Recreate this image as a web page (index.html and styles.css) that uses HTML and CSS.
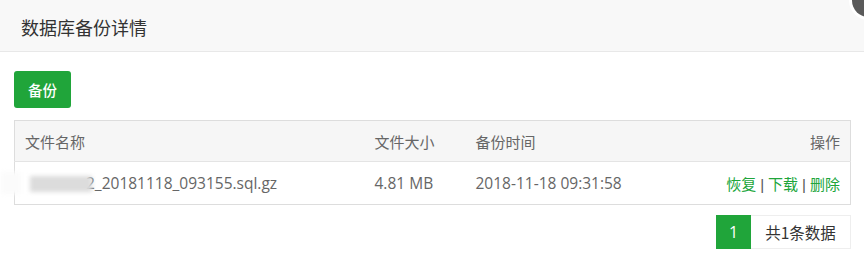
FILE: index.html
```html
<!DOCTYPE html>
<html lang="zh-CN">
<head>
<meta charset="utf-8">
<title>数据库备份详情</title>
<link rel="stylesheet" href="styles.css">
</head>
<body>
<div class="layer">
  <div class="layer-title">数据库备份详情</div>
  <span class="layer-close"></span>
  <div class="layer-content">
    <div class="toolbar">
      <button class="btn-green" type="button">备份</button>
    </div>
    <table class="table">
      <colgroup>
        <col class="c-name">
        <col class="c-size">
        <col class="c-time">
        <col class="c-op">
      </colgroup>
      <thead>
        <tr>
          <th>文件名称</th>
          <th>文件大小</th>
          <th>备份时间</th>
          <th class="right">操作</th>
        </tr>
      </thead>
      <tbody>
        <tr>
          <td class="name"><span class="redact"></span><span class="fname">2_20181118_093155.sql.gz</span></td>
          <td>4.81 MB</td>
          <td>2018-11-18 09:31:58</td>
          <td class="right ops"><a class="link">恢复</a><span class="sep">|</span><a class="link">下载</a><span class="sep">|</span><a class="link">删除</a></td>
        </tr>
      </tbody>
    </table>
    <div class="pager">
      <span class="page-cur">1</span><span class="page-total">共1条数据</span>
    </div>
  </div>
</div>
</body>
</html>
```

FILE: styles.css
```css
html, body {
  margin: 0;
  padding: 0;
  background: #fff;
  overflow: hidden;
}
body {
  font-family: "Open Sans", "Noto Sans CJK SC", sans-serif;
  font-size: 15px;
  color: #666;
}
.layer {
  position: relative;
  width: 864px;
  height: 265px;
}
.layer-title {
  height: 51px;
  line-height: 54px;
  padding-left: 21px;
  background: #f8f8f8;
  border-bottom: 1px solid #e8e8e8;
  font-family: "Noto Sans CJK SC", sans-serif;
  font-size: 18px;
  color: #333;
}
.layer-close {
  position: absolute;
  left: 852px;
  top: -16px;
  width: 33px;
  height: 33px;
  border-radius: 50%;
  background: #5a5a5a;
  box-shadow: 0 0 0 3px #fff;
}
.layer-content {
  padding: 19px 13px 0 14px;
}
.toolbar {
  height: 37px;
  margin-bottom: 12px;
}
.btn-green {
  width: 57px;
  height: 37px;
  padding: 0;
  border: 0;
  border-radius: 3px;
  background: #20a53a;
  color: #fff;
  font-family: "Noto Sans CJK SC", sans-serif;
  font-size: 14.5px;
  font-weight: 500;
}
.table {
  width: 837px;
  border-collapse: collapse;
  table-layout: fixed;
  border: 1px solid #ddd;
}
.c-name { width: 350px; }
.c-size { width: 101px; }
.c-time { width: 200px; }
.table th {
  height: 40px;
  padding: 0 10px;
  background: #f6f6f6;
  font-weight: normal;
  text-align: left;
  color: #666;
  border-bottom: 1px solid #e4e4e4;
  font-family: "Noto Sans CJK SC", sans-serif;
  font-size: 15px;
}
.table td {
  height: 42px;
  padding: 0 10px;
  color: #666;
  white-space: nowrap;
  font-size: 15.5px;
}
.table .right {
  text-align: right;
}
.ops {
  font-family: "Noto Sans CJK SC", sans-serif;
}
.sep {
  display: inline-block;
  margin: 0 4px;
  color: #555;
  font-family: "Liberation Sans", sans-serif;
  font-size: 15px;
}
.name {
  position: relative;
}
.name::before {
  content: "";
  position: absolute;
  left: -14px;
  top: 10px;
  width: 20px;
  height: 22px;
  background: #fbfbfb;
  filter: blur(2px);
}
.redact {
  display: inline-block;
  width: 62px;
  height: 16px;
  margin-left: 5px;
  margin-right: -6px;
  vertical-align: -3px;
  background: #dcdcdc;
  filter: blur(2px);
  position: relative;
  z-index: 1;
}
.link {
  color: #20a53a;
  font-family: "Noto Sans CJK SC", sans-serif;
  font-size: 15px;
}
.pager {
  display: flex;
  justify-content: flex-end;
  margin-top: 10px;
}
.page-cur {
  width: 35px;
  height: 34px;
  line-height: 34px;
  text-align: center;
  background: #20a53a;
  color: #fff;
  font-size: 16px;
}
.page-total {
  width: 99px;
  height: 32px;
  line-height: 32px;
  text-align: center;
  border: 1px solid #eee;
  border-left: 0;
  color: #333;
  font-size: 15.5px;
  font-family: "Noto Sans CJK SC", sans-serif;
}
```
